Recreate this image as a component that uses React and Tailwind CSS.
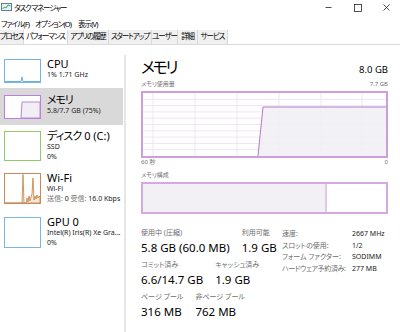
import React from "react";

function SideItem({ className, thumbClass, graph, title, lines }) {
  return (
    <div className={"flex pl-[4px] " + className}>
      <div className={"w-[37px] shrink-0 border bg-white overflow-hidden " + thumbClass}>{graph}</div>
      <div className="ml-[6px] -mt-[1px] flex flex-col min-w-0">
        <div className="text-[11px] leading-[12px] text-black whitespace-nowrap">{title}</div>
        {lines.map((l, i) => (
          <div key={i} className="text-[7px] leading-[10px] text-[#222] whitespace-nowrap">{l}</div>
        ))}
      </div>
    </div>
  );
}

function Stat({ label, value }) {
  return (
    <div className="flex flex-col">
      <div className="text-[7px] leading-[10px] text-[#6d6d6d] whitespace-nowrap">{label}</div>
      <div className="mt-[2px] text-[11.5px] leading-[16px] text-black whitespace-nowrap">{value}</div>
    </div>
  );
}

function Tab({ className, children }) {
  return (
    <div className={"h-full flex items-center justify-center text-[7.5px] tracking-[-0.15em] whitespace-nowrap " + className}>{children}</div>
  );
}

export default function App() {
  const hLines = [6.3, 12.6, 18.9, 25.2, 31.5, 37.8, 44.1, 50.4, 56.7];
  const vLines = [10, 52, 94, 136, 178, 219];
  return (
    <div className="w-[400px] h-[332px] overflow-hidden bg-white flex flex-col text-black [font-family:'Noto_Sans','Noto_Sans_CJK_JP',sans-serif] [font-feature-settings:'palt']">
      {/* title bar */}
      <div className="h-[15px] flex items-center shrink-0">
        <svg width="11" height="9" viewBox="0 0 11 9" className="ml-[1px]">
          <rect x="0.5" y="0.5" width="10" height="7" fill="#e8f1f8" stroke="#5a7fa0" />
          <polyline points="1.5,6 3.5,4 5,5 7,2 9.5,3" fill="none" stroke="#3aa34a" strokeWidth="1" />
        </svg>
        <span className="ml-[2px] text-[7.5px] tracking-[-0.15em] leading-[10px] whitespace-nowrap">タスク マネージャー</span>
        <div className="ml-auto flex items-center h-full -mr-[1px]">
          <div className="w-[29px] h-full flex items-center justify-center">
            <svg width="7" height="7" viewBox="0 0 7 7"><line x1="0.5" y1="3.5" x2="6.5" y2="3.5" stroke="#222" strokeWidth="0.8" /></svg>
          </div>
          <div className="w-[29px] h-full flex items-center justify-center">
            <svg width="8" height="8" viewBox="0 0 8 8"><rect x="0.5" y="0.5" width="7" height="7" fill="none" stroke="#222" strokeWidth="0.8" /></svg>
          </div>
          <div className="w-[29px] h-full flex items-center justify-center">
            <svg width="7" height="7" viewBox="0 0 7 7"><path d="M0.5 0.5 L6.5 6.5 M6.5 0.5 L0.5 6.5" stroke="#222" strokeWidth="0.8" /></svg>
          </div>
        </div>
      </div>
      {/* menu bar */}
      <div className="h-[15px] flex items-center text-[7.5px] tracking-[-0.12em] leading-[10px] shrink-0 pt-[3px] whitespace-nowrap">
        <span className="ml-[1px] w-[34px]">ファイル(F)</span>
        <span className="w-[43px]">オプション(O)</span>
        <span>表示(V)</span>
      </div>
      {/* tabs */}
      <div className="h-[15px] flex items-stretch border-b border-[#d9d9d9] shrink-0">
        <Tab className="w-[24px] bg-[#f0f0f0] border-r border-[#d9d9d9]">プロセス</Tab>
        <Tab className="w-[43px] bg-white">パフォーマンス</Tab>
        <Tab className="w-[42px] bg-[#f0f0f0] border-x border-[#d9d9d9]">アプリの履歴</Tab>
        <Tab className="w-[43px] bg-[#f0f0f0] border-r border-[#d9d9d9]">スタートアップ</Tab>
        <Tab className="w-[26px] bg-[#f0f0f0] border-r border-[#d9d9d9]">ユーザー</Tab>
        <Tab className="w-[20px] bg-[#f0f0f0] border-r border-[#d9d9d9]">詳細</Tab>
        <Tab className="w-[30px] bg-[#f0f0f0] border-r border-[#d9d9d9]">サービス</Tab>
      </div>
      {/* body */}
      <div className="flex-1 flex min-h-0">
        {/* sidebar */}
        <div className="w-[123px] shrink-0 flex flex-col pt-[7px]">
          <SideItem
            className="h-[36px] pt-[7px]"
            thumbClass="h-[24px] border-[#75b4e3]"
            graph={
              <svg width="35" height="22" viewBox="0 0 35 22">
                <polyline points="0,21.5 16,21.5 17,17 18,21.5 35,21.5" fill="#e3eff9" stroke="#4a9bd6" strokeWidth="0.8" />
              </svg>
            }
            title="CPU"
            lines={["1% 1.71 GHz"]}
          />
          <SideItem
            className="h-[37px] pt-[7px] bg-[#d9d9d9]"
            thumbClass="h-[24px] border-[#bf7fdb]"
            graph={
              <svg width="35" height="22" viewBox="0 0 35 22">
                <polygon points="16,22 17,6 35,6 35,22" fill="#f1eef4" stroke="#b47ccd" strokeWidth="0.9" />
              </svg>
            }
            title={<span className="tracking-[-0.1em]">メモリ</span>}
            lines={["5.8/7.7 GB (75%)"]}
          />
          <SideItem
            className="h-[43px] pt-[6px]"
            thumbClass="h-[30px] border-[#93cc66]"
            graph={null}
            title={<span><span className="tracking-[-0.08em]">ディスク</span> 0 (C:)</span>}
            lines={["SSD", "0%"]}
          />
          <SideItem
            className="h-[43px] pt-[5px]"
            thumbClass="h-[31px] border-[#c98a55]"
            graph={
              <svg width="35" height="29" viewBox="0 0 35 29">
                <polygon
                  points="0,29 17,29 18,0.5 19,29 21,29 22,24 23,28 24,22 25,27 26,23 27,20 28,4 29,26 30,22 31,25 32,21 33,24 34,22 35,23 35,29"
                  fill="#f6e7db"
                  stroke="#c7803f"
                  strokeWidth="0.8"
                />
              </svg>
            }
            title="Wi-Fi"
            lines={[
              "Wi-Fi",
              <span>
                <span className="text-[#777]">送信:</span> 0 <span className="text-[#777]">受信:</span> 16.0 Kbps
              </span>,
            ]}
          />
          <SideItem
            className="h-[43px] pt-[6px]"
            thumbClass="h-[31px] border-[#7db4e0]"
            graph={null}
            title="GPU 0"
            lines={["Intel(R) Iris(R) Xe Gra...", "0%"]}
          />
        </div>
        {/* divider */}
        <div className="w-[3px] shrink-0 flex flex-col">
          <div className="h-[10px]" />
          <div className="flex-1 ml-[1px] w-[2px] bg-[#e6e6e6]" />
        </div>
        {/* main */}
        <div className="flex-1 min-w-0 pl-[15px] pr-[12px] pt-[11px] flex flex-col">
          <div className="h-[22px] flex items-baseline justify-between">
            <span className="text-[16px] leading-[22px] tracking-[-0.15em]">メモリ</span>
            <span className="text-[9.5px] leading-[12px]">8.0 GB</span>
          </div>
          <div className="mt-[2px] flex justify-between text-[6px] leading-[9px] text-[#707070]">
            <span>メモリ使用量</span>
            <span>7.7 GB</span>
          </div>
          <div className="mt-[2px] h-[67px] border-2 border-[#cc9fdc] bg-white">
            <svg width="243" height="63" viewBox="0 0 243 63" className="block">
              {hLines.map((y) => (
                <line key={"h" + y} x1="0" y1={y} x2="243" y2={y} stroke="#efe5f3" strokeWidth="1" />
              ))}
              {vLines.map((x) => (
                <line key={"v" + x} x1={x} y1="0" x2={x} y2="63" stroke="#efe5f3" strokeWidth="1" />
              ))}
              <polygon points="115,63 120,14 243,14 243,63" fill="#f1eff4" fillOpacity="0.9" />
              <polyline points="115,63 120,14 243,14" fill="none" stroke="#b27bc9" strokeWidth="1" />
            </svg>
          </div>
          <div className="flex justify-between text-[6px] leading-[9px] text-[#707070]">
            <span>60 秒</span>
            <span>0</span>
          </div>
          <div className="mt-[3.5px] text-[6px] leading-[9px] text-[#707070]">メモリ構成</div>
          <div className="mt-[2.5px] h-[32px] border-2 border-[#d4a8e3] flex">
            <div className="w-[182px] bg-[#f2f0f4]" />
            <div className="w-[2px] bg-[#e2c9ea]" />
            <div className="flex-1 bg-white" />
          </div>
          {/* stats */}
          <div className="mt-[14px] flex">
            <div className="w-[141px] shrink-0 flex flex-col gap-[4px]">
              <div className="flex gap-[12px]">
                <Stat label="使用中 (圧縮)" value="5.8 GB (60.0 MB)" />
                <Stat label="利用可能" value="1.9 GB" />
              </div>
              <div className="flex gap-[12px]">
                <Stat label="コミット済み" value="6.6/14.7 GB" />
                <Stat label="キャッシュ済み" value="1.9 GB" />
              </div>
              <div className="flex gap-[12px]">
                <Stat label="ページ プール" value="316 MB" />
                <Stat label="非ページ プール" value="762 MB" />
              </div>
            </div>
            <div className="flex flex-col text-[7px] leading-[11.5px] whitespace-nowrap">
              <div className="flex"><span className="w-[70px] text-[#6d6d6d]">速度:</span><span className="text-[#222]">2667 MHz</span></div>
              <div className="flex"><span className="w-[70px] text-[#6d6d6d]">スロットの使用:</span><span className="text-[#222]">1/2</span></div>
              <div className="flex"><span className="w-[70px] text-[#6d6d6d]">フォーム ファクター:</span><span className="text-[#222]">SODIMM</span></div>
              <div className="flex"><span className="w-[70px] text-[#6d6d6d] tracking-[-0.05em]">ハードウェア予約済み:</span><span className="text-[#222]">277 MB</span></div>
            </div>
          </div>
        </div>
      </div>
    </div>
  );
}
